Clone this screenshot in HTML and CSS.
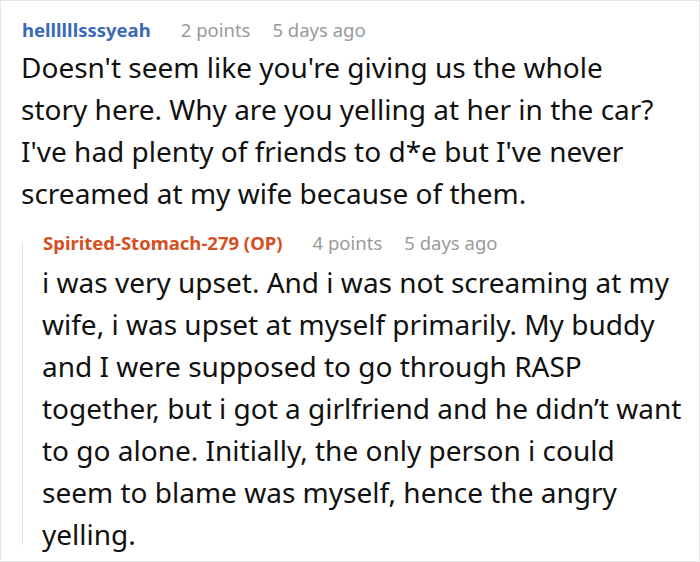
FILE: index.html
```html
<!DOCTYPE html>
<html>
<head>
<meta charset="utf-8">
<link rel="stylesheet" href="styles.css">
</head>
<body>
<div class="thread">
  <div class="comment">
    <div class="meta">
      <span class="user">hellllllsssyeah</span>
      <span class="info">2 points</span>
      <span class="info">5 days ago</span>
    </div>
    <p class="body">Doesn't seem like you're giving us the whole<br>story here. Why are you yelling at her in the car?<br>I've had plenty of friends to d*e but I've never<br>screamed at my wife because of them.</p>
    <div class="reply">
      <div class="rail"></div>
      <div class="reply-content">
        <div class="meta">
          <span class="user op">Spirited-Stomach-279 (OP)</span>
          <span class="info">4 points</span>
          <span class="info">5 days ago</span>
        </div>
        <p class="body reply-body">i was very upset. And i was not screaming at my<br>wife, i was upset at myself primarily. My buddy<br>and I were supposed to go through RASP<br>together, but i got a girlfriend and he didn’t want<br>to go alone. Initially, the only person i could<br>seem to blame was myself, hence the angry<br>yelling.</p>
      </div>
    </div>
  </div>
</div>
</body>
</html>
```
FILE: styles.css
```css
html, body {
  margin: 0;
  padding: 0;
  background: #fff;
}
.thread {
  box-sizing: border-box;
  width: 700px;
  height: 562px;
  border: 1px solid #e6e6e6;
  padding: 16px 0 0 20px;
  font-family: "Noto Sans", "Open Sans", sans-serif;
  color: #111;
}
.meta {
  display: flex;
  gap: 22px;
  align-items: baseline;
  font-size: 18.5px;
  line-height: 26px;
  margin-left: 1px;
  white-space: nowrap;
}
.user {
  font-weight: 700;
  color: #3b69b8;
  margin-right: 8px;
}
.user.op {
  color: #d64f1f;
}
.info {
  color: #9a9a9a;
}
.body {
  margin: 3px 0 0 0;
  font-size: 28px;
  line-height: 42px;
  white-space: nowrap;
}
.reply-body {
  margin-top: 5px;
}
.reply {
  display: flex;
  margin-top: 16px;
}
.rail {
  flex: none;
  width: 1px;
  margin: 13px 0 10px 1px;
  background: #e3e3e3;
}
.reply-content {
  padding-left: 19px;
}
.reply-content .meta {
  margin-left: 1px;
}
```
